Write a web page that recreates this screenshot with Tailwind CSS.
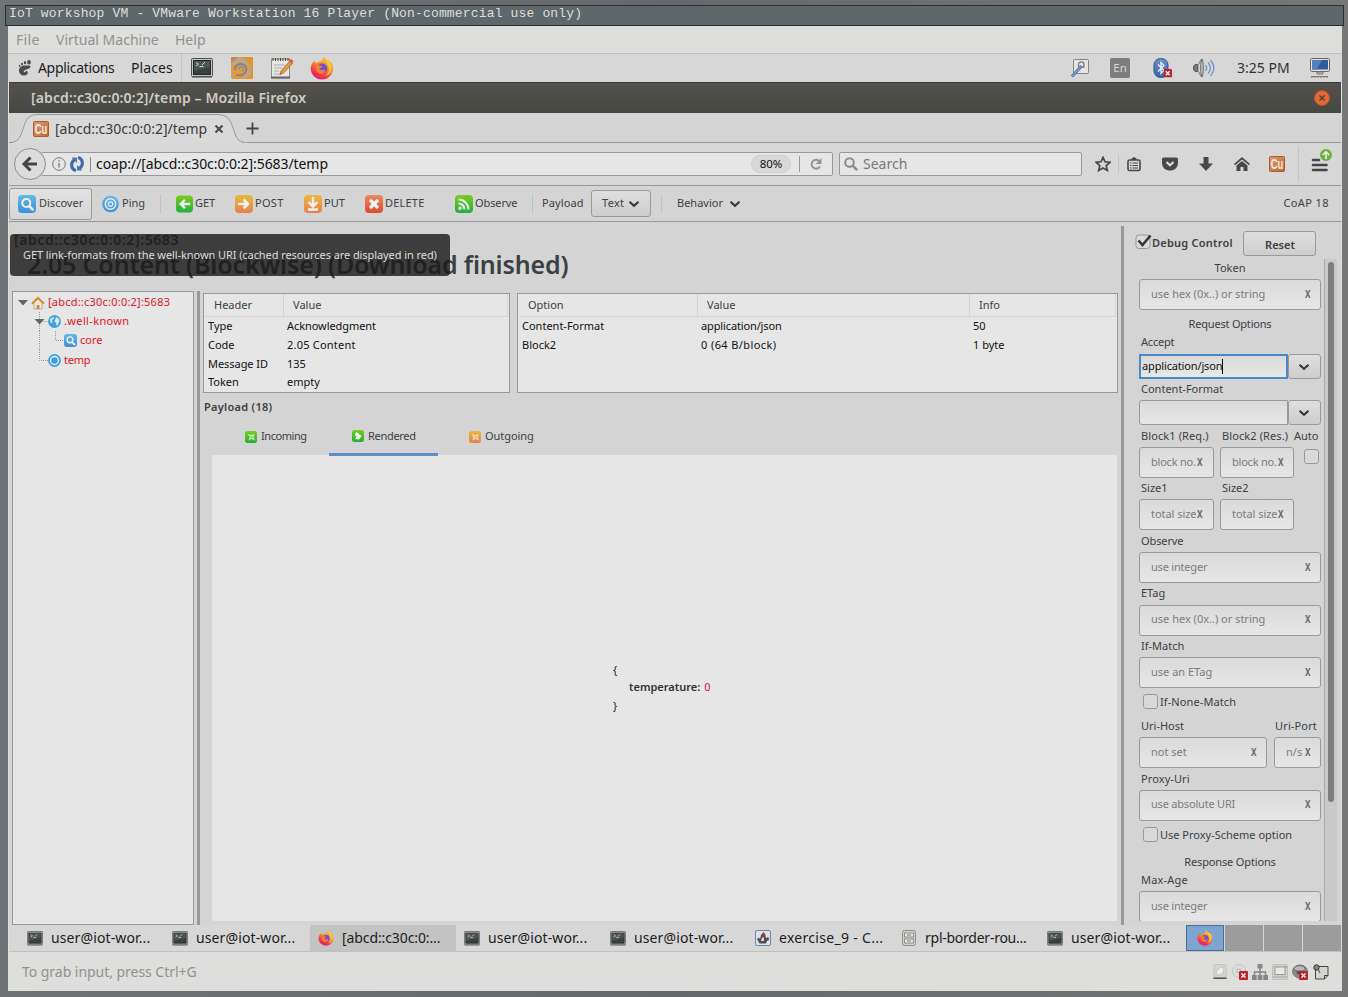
<!DOCTYPE html>
<html lang="en">
<head>
<meta charset="utf-8">
<title>IoT workshop VM</title>
<script src="https://cdn.jsdelivr.net/npm/@tailwindcss/browser@4"></script>
</head>
<body class="w-[1348px] h-[997px] overflow-hidden bg-[#66696b] font-['Noto_Sans',sans-serif] text-[#3b4042]">
<svg width="0" height="0" class="absolute">
  <defs>
    <linearGradient id="gb" x1="0" y1="0" x2="0" y2="1"><stop offset="0" stop-color="#64b9e6"/><stop offset="1" stop-color="#3c8fdc"/></linearGradient>
    <linearGradient id="gg" x1="0" y1="0" x2="0" y2="1"><stop offset="0" stop-color="#78cc1e"/><stop offset="1" stop-color="#22b040"/></linearGradient>
    <linearGradient id="go" x1="0" y1="0" x2="0" y2="1"><stop offset="0" stop-color="#e8b83e"/><stop offset="1" stop-color="#ea7f4a"/></linearGradient>
    <linearGradient id="gr" x1="0" y1="0" x2="0" y2="1"><stop offset="0" stop-color="#ea8a5e"/><stop offset="1" stop-color="#de4a2c"/></linearGradient>
    <linearGradient id="ff" x1=".8" y1="0" x2=".3" y2="1"><stop offset="0" stop-color="#f5dc3c"/><stop offset=".45" stop-color="#f5852c"/><stop offset=".8" stop-color="#ee3350"/><stop offset="1" stop-color="#d61e7c"/></linearGradient>
    <linearGradient id="cu" x1="0" y1="0" x2="1" y2="1"><stop offset="0" stop-color="#dc9c78"/><stop offset="1" stop-color="#c06426"/></linearGradient>
    <linearGradient id="bt" x1="0" y1="0" x2="0" y2="1"><stop offset="0" stop-color="#6e93c4"/><stop offset="1" stop-color="#3465a4"/></linearGradient>
    <linearGradient id="sw" x1="0" y1="0" x2="1" y2="1"><stop offset="0" stop-color="#c98a58"/><stop offset="1" stop-color="#e8a020"/></linearGradient>
  </defs>
  <symbol id="term" viewBox="0 0 22 20"><path d="M1 19.500h20" stroke="#888" /><rect x=".5" y=".5" width="21" height="18" rx="1" fill="#c4c6c2" stroke="#50524e"/><rect x="2.500" y="2.500" width="17" height="14" fill="#38413e" stroke="#222826"/><path d="M3 3h16v6L3 13z" fill="#5a6460" opacity=".6"/><path d="M5 4.500l2.500 1.800L5 8M8.500 8.500h4M11 7l3-3" stroke="#d4d8d4" fill="none"/></symbol>
  <symbol id="fox" viewBox="0 0 24 24"><path d="M4.500 5c.6 1.300 1.200 1.800 2 2.200C8 5.500 10 5.200 11.500 5.400c0-2 1.500-4 3-5 .2 2 1.500 3 3 4.200l.8-.8C22.500 7 23.800 11 22.800 15c-1.200 5-5.800 8.500-10.800 8.500C5.500 23.500.7 18.500.7 12.500c0-3 1.500-6 3.800-7.500z" fill="url(#ff)"/><path d="M16 3.500c4.500 3 6.500 7 5.500 11-1 3.500-4 5-6 5 3-2 4-5 3-8-.6-3-2-5-2.500-8z" fill="#f8d63e" opacity=".75"/><circle cx="12.300" cy="12.500" r="5" fill="#7a4bd0"/><path d="M6 10c2-.8 4-.6 6.300.4-1 1.600-2.500 1.300-2.600 2.400 1 2.400 4.500 1.600 5.800.4-.4 3.500-3 5-5.500 4.500C7 17 5.500 13.500 6 10z" fill="#f2822e"/></symbol>
  <symbol id="cuic" viewBox="0 0 16 16"><rect x=".5" y=".5" width="15" height="15" rx="1" fill="url(#cu)" stroke="#a85c30"/><text x="8" y="13" text-anchor="middle" textLength="12.500" lengthAdjust="spacingAndGlyphs" font-family="Liberation Sans" font-weight="bold" font-size="14" fill="#f4ece6">Cu</text></symbol>
  <symbol id="mag" viewBox="0 0 18 18"><rect width="18" height="18" rx="4" fill="url(#gb)"/><circle cx="8.300" cy="8" r="4" fill="none" stroke="#f2f2f2" stroke-width="2"/><path d="M11.500 11.500l3 3" stroke="#f2f2f2" stroke-width="2.600" stroke-linecap="round"/></symbol>
  <symbol id="badx" viewBox="0 0 9 9"><rect width="9" height="9" rx="1" fill="#c02028"/><path d="M2.500 2.500l4 4m0-4l-4 4" stroke="#fff" stroke-width="1.500"/></symbol>
  <symbol id="chev" viewBox="0 0 12 8"><path d="M1.500 1.700L6 5.800l4.500-4.100" fill="none" stroke="#33393b" stroke-width="2.100"/></symbol>
  <symbol id="tin" viewBox="0 0 12 12"><rect width="12" height="12" rx="2.500" fill="url(#gg)"/><path d="M2.500 3L6 4l3.500-1L8.500 6l1.500 3.500L6.500 8 3 9.500 5 6z" fill="#e9f6e4" opacity=".8"/><path d="M5.500 6h2" stroke="#3cb43c"/></symbol>
  <symbol id="tren" viewBox="0 0 12 12"><rect width="12" height="12" rx="2.500" fill="url(#gg)"/><path d="M4.500 2L7 4l2.500 2L7 9.500 3 9l1.500-2.500L2.800 5z" fill="#eef8ea"/></symbol>
  <symbol id="tout" viewBox="0 0 12 12"><rect width="12" height="12" rx="2.500" fill="url(#go)"/><path d="M2.500 3L6 4l3.500-1L9 6l1 3.500L6.500 8 3.500 9.500 4 6z" fill="#f8e8d6" opacity=".8"/><path d="M5.500 6h2" stroke="#e8904a"/></symbol>
</svg>

<div class="w-[1348px] h-[997px] flex flex-col bg-linear-to-r from-[#707375] via-[#66696b] to-[#777]">
  <!-- window title -->
  <header class="mt-[5px] ml-[5px] w-[1339px] h-[21px] shrink-0 border border-[#2a2e30] bg-[#5e676a] font-['Liberation_Mono',monospace] text-[13px] tracking-[0.16px] leading-[16px] text-[#dcdfdf] pl-[3px] whitespace-pre">IoT workshop VM - VMware Workstation 16 Player (Non-commercial use only)</header>
  <div class="ml-[8px] w-[1334px] h-[965px] shrink-0 flex flex-col bg-[#dededc] whitespace-nowrap">
    <nav class="h-[28px] shrink-0 flex items-center border-b border-[#c0c0be] pl-[8px] text-[14px] text-[#90928f]">
      <span class="w-[40px] tracking-[0.3px]">File</span><span class="w-[119px]">Virtual Machine</span><span>Help</span>
    </nav>
    <!-- desktop panel -->
    <div class="h-[28px] shrink-0 flex items-center bg-[#d7d7d7] text-[14px] text-[#1c1c1c] pl-[10px]">
      <svg class="w-[14px] h-[16px]" viewBox="0 0 14 16"><path d="M7 5.500C3.500 5.500 1 7.500 1 10.500 1 13.500 3.500 15.500 6 15.500c2.500 0 4-1.500 3.800-3.300-.2-1.300-1.800-1.500-2.300-.6-.4.800-1.800.8-1.800-.3C5.700 9.500 12.500 9.500 12.500 6.500c0-1.300-2.500-1-5.500-1z" fill="#4a4c4c"/><ellipse cx="11" cy="2.200" rx="1.800" ry="2.200" fill="#4a4c4c"/><ellipse cx="7" cy="2.700" rx="1.200" ry="1.600" fill="#4a4c4c"/><ellipse cx="4" cy="4" rx="1" ry="1.300" fill="#4a4c4c"/><ellipse cx="1.700" cy="5.800" rx=".8" ry="1.100" fill="#4a4c4c"/></svg>
      <span class="ml-[6px] w-[93px] pb-[2px] tracking-[-0.33px]">Applications</span><span class="w-[50px] pb-[2px] tracking-[0.1px]">Places</span>
      <span class="w-px h-[28px] bg-[#c3c3c3]"></span>
      <svg class="ml-[9px] w-[22px] h-[20px]"><use href="#term"/></svg>
      <svg class="ml-[18px] w-[22px] h-[22px]" viewBox="0 0 22 22"><rect width="22" height="22" rx="1.500" fill="#b9a68c"/><path d="M9 0h13v22h-8c6-3 8-8 6-13C18 5 14 2 9 0z" fill="#e0962c"/><path d="M0 0h7L0 6z" fill="#cf8448"/><path d="M0 9c2-5 7-7.500 12-6 5 2 7 7 5 12-1 3-3 5-6 7H1C4 20 0 16 0 9z" fill="#e29a3c"/><path d="M1.500 8C5 2.500 12 2.500 15.500 6.500" fill="none" stroke="#a9b0b2" stroke-width="1.800"/><path d="M4 13C3.500 9 7 6.500 10.500 7c4 .6 5.500 4 4.500 7-1.300 3.600-6 5.500-10 3.500" fill="none" stroke="#6f87a0" stroke-width="1.900"/><path d="M8 12.500c-.2-2 1.200-3 2.800-2.600 2 .6 2 3.300.4 4.200" fill="none" stroke="#7d8fa0" stroke-width="1.400"/></svg>
      <svg class="ml-[17px] w-[24px] h-[22px]" viewBox="0 0 24 22"><rect x="1.500" y="2" width="18" height="19" fill="#e6e6e3" stroke="#8c8e8a"/><path d="M1 20.500h19" stroke="#666" stroke-width="2"/><path d="M3 1v3m2.500-3v3M8 1v3m2.500-3v3M13 1v3m2.500-3v3M18 1v3" stroke="#333" stroke-width=".9"/><path d="M4 8h11M4 11h8M4 14h5M4 17h7" stroke="#aaa"/><path d="M20 4l2.500 2.500-9 9.500-3.500 1.500 1-3.500z" fill="#e89a3c" stroke="#8c5a20" stroke-width=".7"/><path d="M19 4l2-2 2.500 2.500-1.700 2z" fill="#d85050"/></svg>
      <svg class="ml-[16px] w-[24px] h-[24px]"><use href="#fox"/></svg>
      <div class="ml-auto h-[28px] flex items-center pr-[11px]">
        <svg class="w-[20px] h-[20px]" viewBox="0 0 20 20"><rect x="3.500" y="1.500" width="15" height="14" rx="1" fill="#e4e4e2" stroke="#84867f"/><path d="M8.500 9V6.500a2.700 2.700 0 0 1 5.400 0V9H11" fill="none" stroke="#777" stroke-width="1.300"/><path d="M11.500 8L2 18.500" stroke="#4c76ae" stroke-width="3"/><path d="M11 8.500L2.500 18" stroke="#9ab6dc" stroke-width="1"/></svg>
        <span class="ml-[20px] w-[20px] h-[20px] bg-[#7e7e7e] rounded-[2px] text-[#d7d7d7] text-[11.500px] leading-[20px] text-center">En</span>
        <svg class="ml-[23px] w-[20px] h-[20px]" viewBox="0 0 20 20"><rect x="1" y=".5" width="14" height="19" rx="6.500" fill="url(#bt)" stroke="#2f5588"/><path d="M5 6.500l6 6-3 3v-11l3 3-6 6" fill="none" stroke="#eef" stroke-width="1.300"/><use href="#badx" x="10.500" y="11" width="8.500" height="8.500"/></svg>
        <svg class="ml-[19px] w-[23px] h-[20px]" viewBox="0 0 23 20"><path d="M3 6.500C1 8 1 12 3 13.500h2.500V6.500z" fill="#777" stroke="#555"/><path d="M6 7l3.500-6v18L6 13z" fill="#d8d8d6" stroke="#777"/><ellipse cx="10" cy="10" rx="1.300" ry="9" fill="#c8c8c6" stroke="#666"/><path d="M13.500 7c1.500 2 1.500 4 0 6M16 4.500c3 3.500 3 7.500 0 11M18.500 2c4.200 5 4.200 11 0 16" fill="none" stroke="#6f93c4" stroke-width="1.300"/></svg>
        <span class="ml-[22px] w-[73px] pb-[2px] text-[#333]">3:25 PM</span>
        <svg class="w-[21px] h-[20px]" viewBox="0 0 21 20"><rect x=".5" y=".5" width="19" height="13" rx="1" fill="#e0e0dc" stroke="#666"/><rect x="2" y="2" width="16" height="9.500" fill="#2f5b98"/><path d="M2 2h10l-5 9.500H2z" fill="#5180bc"/><path d="M7 14h6v2H7zM1 18.500h17" fill="#ccc" stroke="#777"/><path d="M1 19.300h17" stroke="#999" stroke-dasharray="2 1"/></svg>
      </div>
    </div>
    <!-- browser title bar -->
    <div class="h-[31px] ml-px mr-px shrink-0 flex items-center border-t border-[#3c3b37] bg-linear-to-b from-[#53524d] to-[#474742] pl-[22px] pr-[11px] text-[14px] font-bold text-[#cfcdc4]">
      <span class="pb-[2px] font-semibold tracking-[0.12px]">[abcd::c30c:0:0:2]/temp – Mozilla Firefox</span>
      <svg class="ml-auto w-[16px] h-[16px]" viewBox="0 0 16 16"><circle cx="8" cy="8" r="7.500" fill="#e06a3c" stroke="#b8502c"/><path d="M5.500 5.500l5 5m0-5l-5 5" stroke="#442" stroke-width="1.300"/></svg>
    </div>
    <!-- tab strip -->
    <div class="h-[30px] ml-px mr-px shrink-0 relative flex items-center bg-[#d4d4d4] border-b border-[#999]">
      <svg class="absolute left-0 top-0 w-[250px] h-[30px]" viewBox="0 0 250 30"><path d="M0 29.500H2C18 29 10 1.500 28 1.500H206C230 1.500 218 29 236 29.500h2v.5H0z" fill="#d9d9d9"/><path d="M0 29.500H2C18 29 10 1.500 28 1.500H208C230 1.500 220 29 236 29.500" fill="none" stroke="#999"/></svg>
      <div class="relative flex items-center pl-[24px] pt-[2px] text-[14px] text-[#3b3b3b]">
        <svg class="w-[16px] h-[16px]"><use href="#cuic"/></svg>
        <span class="ml-[6px] w-[159px] tracking-[-0.04px]">[abcd::c30c:0:0:2]/temp</span>
        <svg class="w-[10px] h-[10px]" viewBox="0 0 10 10"><path d="M1.500 1.500l7 7m0-7l-7 7" stroke="#4c4c4c" stroke-width="2.200"/></svg>
        <svg class="ml-[22px] w-[13px] h-[13px]" viewBox="0 0 13 13"><path d="M6.500 .5v12M.5 6.500h12" stroke="#444" stroke-width="1.800"/></svg>
      </div>
    </div>
    <!-- navigation bar -->
    <div class="h-[43px] ml-px mr-px shrink-0 flex items-center bg-[#d7d7d7] border-b border-[#999]">
      <svg class="ml-[4px] w-[34px] h-[34px] z-10" viewBox="0 0 34 34"><circle cx="17" cy="17" r="15.500" fill="#dcdcdc" stroke="#8e8e8e"/><path d="M24 17H12M17.500 10.500L11 17l6.500 6.500" fill="none" stroke="#444" stroke-width="3"/></svg>
      <div class="-ml-[6px] w-[792px] h-[24px] flex items-center bg-[#e6e6e6] border border-[#999] rounded-[2px] pl-[10px] text-[14px] text-[#111]">
        <svg class="w-[14px] h-[14px]" viewBox="0 0 14 14"><circle cx="7" cy="7" r="6.300" fill="none" stroke="#777"/><path d="M7 6v4.500M7 3.300v1.500" stroke="#777" stroke-width="1.300"/></svg>
        <svg class="ml-[3px] w-[16px] h-[16px]" viewBox="0 0 16 16"><path d="M7 14.500C2 13.500 1 7 5.500 3.500M9 1.500c5 1 6 7.500 1.500 11" fill="none" stroke="#3f6aa8" stroke-width="3"/><path d="M2.500 1.500h5.500v5.500zM13.500 14.500H8V9z" fill="#4a76b4"/></svg>
        <span class="ml-[5px] w-px h-[15px] bg-[#888]"></span>
        <span class="ml-[5px] pb-[2px] tracking-[-0.08px]">coap://[abcd::c30c:0:0:2]:5683/temp</span>
        <span class="ml-auto w-[40px] h-[18px] rounded-full bg-[#d8d8d8] border border-[#cfcfcf] text-center text-[11.500px] leading-[16px]">80%</span>
        <span class="ml-[8px] w-px h-[16px] bg-[#999]"></span>
        <svg class="ml-[9px] mr-[9px] w-[14px] h-[14px]" viewBox="0 0 14 14"><path d="M10.500 4.200A4.500 4.500 0 1 0 11 9.500" fill="none" stroke="#8b979f" stroke-width="2"/><path d="M12.500 1v6h-6z" fill="#8b979f"/></svg>
      </div>
      <div class="ml-[6px] w-[243px] h-[24px] flex items-center bg-[#e6e6e6] border border-[#999] rounded-[2px] pl-[4px] text-[14px] text-[#787878]">
        <svg class="w-[14px] h-[14px]" viewBox="0 0 14 14"><circle cx="5.500" cy="5.500" r="4.300" fill="none" stroke="#8c8c8c" stroke-width="2"/><path d="M8.800 8.800l4.400 4.400" stroke="#8c8c8c" stroke-width="2.500"/></svg>
        <span class="ml-[5px] pb-[2px]">Search</span>
      </div>
      <div class="flex items-center ml-[13px]">
        <svg class="w-[16px] h-[16px]" viewBox="0 0 16 16"><path d="M8 1.300l2 4.500 4.900.5-3.700 3.200 1.100 4.900L8 11.900l-4.300 2.500 1.100-4.900L1.100 6.300 6 5.800z" fill="none" stroke="#484848" stroke-width="1.700"/></svg>
        <span class="ml-[7px] w-px h-[16px] bg-[#c0c0c0]"></span>
        <svg class="ml-[8px] w-[14px] h-[16px]" viewBox="0 0 14 16"><rect x="1" y="4" width="12" height="10.500" rx="1.500" fill="none" stroke="#484848" stroke-width="1.600"/><path d="M4.500 4V2.500L7 1l2.500 1.500V4z" fill="#484848"/><path d="M3 7h1.500m1 0H11M3 9.500h1.500m1 0H11M3 12h1.500m1 0H11" stroke="#484848" stroke-width="1.200"/></svg>
        <svg class="ml-[21px] w-[16px] h-[16px]" viewBox="0 0 16 16"><path d="M1.500 1.500h13q1.500 0 1.500 1.500v4c0 10-16 10-16 0V3q0-1.500 1.500-1.500z" fill="#484848"/><path d="M4.500 6L8 9.300 11.500 6" fill="none" stroke="#ddd" stroke-width="2"/></svg>
        <svg class="ml-[21px] w-[14px] h-[16px]" viewBox="0 0 14 16"><path d="M4.500 1h5v6.500H14L7 15 0 7.500h4.500z" fill="#484848"/></svg>
        <svg class="ml-[21px] w-[16px] h-[16px]" viewBox="0 0 16 16"><path d="M8 1l8 7-1 1.200L8 3.500 1 9.200 0 8zM8 5l5.500 4.500V15H9.500v-4h-3v4h-4V9.500z" fill="#484848"/></svg>
        <svg class="ml-[19px] w-[16px] h-[16px]"><use href="#cuic"/></svg>
        <span class="ml-[13px] w-px h-[36px] bg-[#c4c4c4]"></span>
        <svg class="ml-[12px] -mt-[6px] w-[22px] h-[26px]" viewBox="0 0 22 26"><path d="M2 12h6M2 17h13.500M2 22h13.500" stroke="#444" stroke-width="2.600" stroke-linecap="round"/><circle cx="15" cy="7" r="6" fill="#6cb33f"/><path d="M15 11V4M11.800 7L15 3.800 18.200 7" fill="none" stroke="#eee" stroke-width="1.600"/></svg>
      </div>
    </div>
    <!-- CoAP toolbar -->
    <div class="h-[36px] ml-px mr-px shrink-0 flex items-center bg-[#d4d4d4] border-b border-[#999] text-[11px]">
      <div class="w-[83px] h-[32px] flex items-center border border-[#999] rounded-[3px] bg-linear-to-b from-[#e2e2e2] to-[#d6d6d6] pl-[8px]"><svg class="w-[18px] h-[18px]"><use href="#mag"/></svg><span class="ml-[3px]">Discover</span></div>
      <svg class="ml-[10px] w-[17px] h-[18px]" viewBox="0 0 18 18"><circle cx="9" cy="9" r="8.800" fill="url(#gb)"/><circle cx="9" cy="9" r="5.500" fill="none" stroke="#eee" stroke-width="1.500"/><circle cx="9" cy="9" r="2.300" fill="none" stroke="#eee" stroke-width="1.400"/></svg>
      <span class="ml-[3px] w-[38px]">Ping</span>
      <span class="w-px h-[20px] bg-[#c0c0c0]"></span>
      <svg class="ml-[15px] w-[17px] h-[18px]" viewBox="0 0 18 18"><rect width="18" height="18" rx="4" fill="url(#gg)"/><path d="M15 9H6M9.500 4.500L5 9l4.500 4.500" fill="none" stroke="#f2f2f2" stroke-width="2.600"/></svg>
      <span class="ml-[2px] w-[40px]">GET</span>
      <svg class="w-[18px] h-[18px]" viewBox="0 0 18 18"><rect width="18" height="18" rx="4" fill="url(#go)"/><path d="M3 9h9M8.500 4.500L13 9l-4.500 4.500" fill="none" stroke="#f2f2f2" stroke-width="2.600"/></svg>
      <span class="ml-[2px] w-[49px] tracking-[0.3px]">POST</span>
      <svg class="w-[18px] h-[18px]" viewBox="0 0 18 18"><rect width="18" height="18" rx="4" fill="url(#go)"/><path d="M9 2v8M4.500 7L9 11.500 13.500 7M4 14.500h10" fill="none" stroke="#f2f2f2" stroke-width="2.400"/></svg>
      <span class="ml-[2px] w-[41px]">PUT</span>
      <svg class="w-[18px] h-[18px]" viewBox="0 0 18 18"><rect width="18" height="18" rx="4" fill="url(#gr)"/><path d="M5 5l8 8m0-8l-8 8" stroke="#f2f2f2" stroke-width="3.200"/></svg>
      <span class="ml-[2px] w-[70px] tracking-[0.2px]">DELETE</span>
      <svg class="w-[18px] h-[18px]" viewBox="0 0 18 18"><rect width="18" height="18" rx="4" fill="url(#gg)"/><circle cx="5" cy="13.200" r="1.700" fill="#f2f2f2"/><path d="M3.500 8.500a6 6 0 0 1 6 6M3.500 4.500a10 10 0 0 1 10 10" fill="none" stroke="#f2f2f2" stroke-width="2"/></svg>
      <span class="ml-[2px] w-[57px] tracking-[-0.1px]">Observe</span>
      <span class="w-px h-[20px] bg-[#c0c0c0]"></span>
      <span class="ml-[9px] w-[49px] tracking-[0.1px]">Payload</span>
      <div class="w-[60px] h-[27px] flex items-center border border-[#999] rounded-[3px] bg-linear-to-b from-[#dfdfdf] to-[#cdcdcd] pl-[10px]"><span class="w-[26px] tracking-[0.3px]">Text</span><svg class="w-[12px] h-[8px]"><use href="#chev"/></svg></div>
      <span class="ml-[10px] w-px h-[18px] bg-[#c0c0c0]"></span>
      <span class="ml-[15px] w-[52px]">Behavior</span><svg class="w-[12px] h-[8px]"><use href="#chev"/></svg>
      <span class="ml-auto pr-[12px] tracking-[0.4px]">CoAP 18</span>
    </div>
    <!-- page -->
    <main class="h-[703px] ml-px mr-px shrink-0 relative flex bg-[#d4d4d4] text-[11px]">
      <section class="w-[1112px] shrink-0 flex flex-col">
        <div class="h-[69px] shrink-0 font-semibold pt-[9px]">
          <div class="pl-[5px] h-[18px] leading-[18px] text-[14px] tracking-[0.6px]">[abcd::c30c:0:0:2]:5683</div>
          <div class="pl-[18px] h-[32px] leading-[30px] text-[25px] tracking-[-0.15px]">2.05 Content (Blockwise) (Download finished)</div>
        </div>
        <div class="flex h-[634px]">
          <div class="ml-[3px] w-[182px] border border-[#999] bg-[#e6e6e6] text-[#e8141c] flex flex-col pt-px">
            <div class="h-[19px] flex items-center pl-[5px]"><svg class="w-[11px] h-[6px]" viewBox="0 0 11 6"><path d="M0 0h10L5 5.500z" fill="#666"/></svg><svg class="ml-[2px] w-[14px] h-[14px]" viewBox="0 0 14 14"><path d="M3 7l4-4 4 4v6H3z" fill="#f0ece6" stroke="#b4a898"/><path d="M.8 7.800L7 1.800l6.200 6" fill="none" stroke="#e08a30" stroke-width="2"/><path d="M5.500 9h3v4h-3z" fill="#c88848"/></svg><span class="ml-[3px] tracking-[0.22px]">[abcd::c30c:0:0:2]:5683</span></div>
            <div class="h-[19px] flex items-center pl-[21px]"><svg class="w-[14px] h-[19px]" viewBox="0 0 14 19"><path d="M5.500 0v19M5.500 9.500H14" stroke="#999" stroke-dasharray="1 1"/><path d="M.5 7h10L5.500 12.500z" fill="#666"/></svg><svg class="w-[13px] h-[13px]" viewBox="0 0 13 13"><circle cx="6.500" cy="6.500" r="6.400" fill="#3f9fe0"/><path d="M1.800 4.500L5 2l1.500 1L4 5l.5 2L3 8.500zM8 2l2.500 1.500L11.500 6 10 9.500 8.500 11 8 8 6.500 6.500z" fill="#d4eafa"/></svg><span class="ml-[3px] tracking-[0.36px]">.well-known</span></div>
            <div class="h-[19px] flex items-center pl-[21px]"><svg class="w-[30px] h-[19px]" viewBox="0 0 30 19"><path d="M5.500 0v19M21.500 0v9.500H29" fill="none" stroke="#999" stroke-dasharray="1 1"/></svg><svg class="w-[13px] h-[13px]"><use href="#mag"/></svg><span class="ml-[3px]">core</span></div>
            <div class="h-[20px] flex items-center pl-[21px]"><svg class="w-[14px] h-[20px]" viewBox="0 0 14 20"><path d="M5.500 0v10.500H14" fill="none" stroke="#999" stroke-dasharray="1 1"/></svg><svg class="w-[13px] h-[13px]" viewBox="0 0 13 13"><circle cx="6.500" cy="6.500" r="6.400" fill="#3f9fe0"/><circle cx="6.500" cy="6.500" r="4" fill="none" stroke="#e8f4fc" stroke-width="1.300"/></svg><span class="ml-[3px] pt-px tracking-[-0.2px]">temp</span></div>
          </div>
          <div class="ml-[3px] w-[3px] bg-[#999]"></div>
          <div class="ml-[3px] flex flex-col w-[915px]">
            <div class="mt-[2px] h-[100px] flex gap-[7px]">
              <div class="w-[307px] border border-[#999] bg-[#e6e6e6] text-[#111]">
                <div class="h-[23px] ml-px mr-px flex border-b border-r border-[#d2d2d2] leading-[22px] text-[#3b4042]"><span class="w-[79px] pl-[9px] border-r border-[#d2d2d2]">Header</span><span class="pl-[9px]">Value</span></div>
                <div class="grid grid-cols-[79px_1fr] grid-rows-[19px_19px_18px_19px] leading-[18px] pl-[4px]"><span>Type</span><span class="tracking-[-0.07px]">Acknowledgment</span><span>Code</span><span class="tracking-[0.22px]">2.05 Content</span><span class="tracking-[-0.05px]">Message ID</span><span>135</span><span>Token</span><span>empty</span></div>
              </div>
              <div class="w-[601px] border border-[#999] bg-[#e6e6e6] text-[#111]">
                <div class="h-[23px] ml-px mr-px flex border-b border-r border-[#d2d2d2] leading-[22px] text-[#3b4042]"><span class="w-[179px] pl-[9px] border-r border-[#d2d2d2]">Option</span><span class="w-[272px] pl-[9px] border-r border-[#d2d2d2]">Value</span><span class="pl-[9px]">Info</span></div>
                <div class="grid grid-cols-[179px_272px_1fr] auto-rows-[19px] leading-[18px] pl-[4px]"><span>Content-Format</span><span class="tracking-[-0.13px]">application/json</span><span>50</span><span>Block2</span><span class="tracking-[0.4px]">0 (64 B/block)</span><span>1 byte</span></div>
              </div>
            </div>
            <div class="h-[28px] leading-[28px] pl-px font-semibold tracking-[0.28px]">Payload (18)</div>
            <div class="h-[34px] flex pl-[9px]">
              <div class="w-[117px] flex items-start pl-[33px] pt-[8px]"><svg class="mt-[2px] w-[12px] h-[12px]"><use href="#tin"/></svg><span class="ml-[4px] leading-[14px] tracking-[-0.45px]">Incoming</span></div>
              <div class="w-[109px] flex items-start pl-[23px] pt-[8px] h-[35px] border-b-3 border-[#5b8fc8] z-10"><svg class="mt-px w-[12px] h-[12px]"><use href="#tren"/></svg><span class="ml-[4px] leading-[14px] tracking-[-0.3px]">Rendered</span></div>
              <div class="flex items-start pl-[31px] pt-[8px]"><svg class="mt-[2px] w-[12px] h-[12px]"><use href="#tout"/></svg><span class="ml-[4px] leading-[14px] tracking-[-0.05px]">Outgoing</span></div>
            </div>
            <div class="ml-[9px] w-[905px] h-[466px] bg-[#e6e6e6] flex items-center justify-center">
              <div class="w-[103px] leading-[18px] text-[#222] pb-px"><div>{</div><div class="pl-[16px] h-[17px] leading-[16px]"><b class="font-semibold text-[#333]">temperature:</b><span class="ml-[4px] text-[#e01440]">0</span></div><div class="pt-px">}</div></div>
            </div>
          </div>
        </div>
      </section>
      <div class="mt-[4px] w-[3px] h-[699px] bg-[#999]"></div>
      <!-- debug control sidebar -->
      <aside class="flex-1 flex flex-col">
        <div class="h-[37px] pt-[9px] pl-[11px] flex font-semibold">
          <svg class="mt-[3px] w-[17px] h-[16px]" viewBox="0 0 17 16"><rect x="1" y="1" width="14" height="13.500" rx="3" fill="#dadada" stroke="#999"/><path d="M3.500 6.500l4 4.500L15.500 1.500" fill="none" stroke="#33393b" stroke-width="2.600"/></svg>
          <span class="w-[91px] leading-[23px] tracking-[0.22px]">Debug Control</span>
          <span class="w-[73px] h-[25px] border border-[#999] rounded-[3px] bg-linear-to-b from-[#dfdfdf] to-[#cdcdcd] text-center leading-[25px] pl-px">Reset</span>
        </div>
        <div class="h-[662px] flex overflow-hidden">
          <div class="ml-[15px] w-[182px] flex flex-col *:shrink-0">
            <div class="h-[20px] leading-[18px] text-center">Token</div>
            <div class="h-[31px] flex justify-between items-center border border-[#999] rounded-[3px] bg-linear-to-b from-[#dadada] to-[#e7e7e7] pl-[11px] pr-[9px] text-[#7c7c7c]"><span>use hex (0x..) or string</span><b class="text-[11px] scale-x-75 text-[#666c6e]">X</b></div>
            <div class="h-[23px] leading-[28px] text-center tracking-[-0.2px]">Request Options</div>
            <div class="h-[21px] leading-[18px] pl-[2px] tracking-[-0.2px]">Accept</div>
            <div class="h-[25px] flex"><div class="w-[149px] border-2 border-[#4a88cc] bg-linear-to-b from-[#dadada] to-[#e7e7e7] pl-px pb-px leading-[20px] text-[#111] flex items-center"><span class="tracking-[-0.15px]">application/json</span><span class="w-px h-[15px] bg-black"></span></div><div class="w-[33px] border border-[#999] rounded-[3px] bg-linear-to-b from-[#dfdfdf] to-[#cdcdcd] flex items-center justify-center pr-[2px]"><svg class="w-[12px] h-[8px]"><use href="#chev"/></svg></div></div>
            <div class="h-[21px] leading-[20px] pl-[2px]">Content-Format</div>
            <div class="h-[25px] flex"><div class="w-[149px] border border-[#999] rounded-l-[3px] bg-linear-to-b from-[#dadada] to-[#e7e7e7]"></div><div class="w-[33px] border border-[#999] rounded-[3px] bg-linear-to-b from-[#dfdfdf] to-[#cdcdcd] flex items-center justify-center pr-[2px]"><svg class="w-[12px] h-[8px]"><use href="#chev"/></svg></div></div>
            <div class="h-[22px] leading-[22px] pl-[2px] flex"><span class="w-[81px] tracking-[0.1px]">Block1 (Req.)</span><span class="w-[72px] tracking-[0.1px]">Block2 (Res.)</span><span>Auto</span></div>
            <div class="h-[31px] flex gap-[6px] text-[#7c7c7c]"><div class="w-[75px] flex items-center border border-[#999] rounded-[3px] bg-linear-to-b from-[#dadada] to-[#e7e7e7] pl-[11px] pb-px"><span class="w-[45px] tracking-[-0.22px]">block no.</span><b class="text-[11px] scale-x-75 text-[#666c6e]">X</b></div><div class="w-[74px] flex items-center border border-[#999] rounded-[3px] bg-linear-to-b from-[#dadada] to-[#e7e7e7] pl-[11px] pb-px"><span class="w-[45px] tracking-[-0.22px]">block no.</span><b class="text-[11px] scale-x-75 text-[#666c6e]">X</b></div><span class="mt-[2px] ml-[4px] w-[15px] h-[15px] border border-[#999] rounded-[3px] bg-[#d9d9d9]"></span></div>
            <div class="h-[21px] leading-[20px] pl-[2px] flex"><span class="w-[81px]">Size1</span><span>Size2</span></div>
            <div class="h-[31px] flex gap-[6px] text-[#7c7c7c]"><div class="w-[75px] flex items-center border border-[#999] rounded-[3px] bg-linear-to-b from-[#dadada] to-[#e7e7e7] pl-[11px]"><span class="w-[45px] tracking-[-0.05px] overflow-hidden">total size</span><b class="text-[11px] scale-x-75 text-[#666c6e]">X</b></div><div class="w-[74px] flex items-center border border-[#999] rounded-[3px] bg-linear-to-b from-[#dadada] to-[#e7e7e7] pl-[11px]"><span class="w-[45px] tracking-[-0.05px] overflow-hidden">total size</span><b class="text-[11px] scale-x-75 text-[#666c6e]">X</b></div></div>
            <div class="h-[22px] leading-[22px] pl-[2px] tracking-[-0.1px]">Observe</div>
            <div class="h-[31px] flex justify-between items-center border border-[#999] rounded-[3px] bg-linear-to-b from-[#dadada] to-[#e7e7e7] pl-[11px] pr-[9px] text-[#7c7c7c]"><span class="tracking-[-0.2px]">use integer</span><b class="text-[11px] scale-x-75 text-[#666c6e]">X</b></div>
            <div class="h-[22px] leading-[20px] pl-[2px]">ETag</div>
            <div class="h-[31px] flex justify-between items-center border border-[#999] rounded-[3px] bg-linear-to-b from-[#dadada] to-[#e7e7e7] pl-[11px] pr-[9px] pb-[2px] text-[#7c7c7c]"><span>use hex (0x..) or string</span><b class="text-[11px] scale-x-75 text-[#666c6e]">X</b></div>
            <div class="h-[21px] leading-[20px] pl-[2px]">If-Match</div>
            <div class="h-[31px] flex justify-between items-center border border-[#999] rounded-[3px] bg-linear-to-b from-[#dadada] to-[#e7e7e7] pl-[11px] pr-[9px] text-[#7c7c7c]"><span>use an ETag</span><b class="text-[11px] scale-x-75 text-[#666c6e]">X</b></div>
            <div class="h-[28px] flex items-center pl-[4px]"><span class="mb-px w-[15px] h-[15px] border border-[#999] rounded-[3px] bg-[#d9d9d9]"></span><span class="ml-[2px] tracking-[0.1px]">If-None-Match</span></div>
            <div class="h-[21px] leading-[20px] pl-[2px] flex"><span class="w-[134px]">Uri-Host</span><span class="tracking-[0.15px]">Uri-Port</span></div>
            <div class="h-[31px] flex gap-[7px] text-[#7c7c7c]"><div class="w-[128px] flex justify-between items-center border border-[#999] rounded-[3px] bg-linear-to-b from-[#dadada] to-[#e7e7e7] pl-[11px] pr-[9px]"><span>not set</span><b class="text-[11px] scale-x-75 text-[#666c6e]">X</b></div><div class="w-[47px] flex justify-between items-center border border-[#999] rounded-[3px] bg-linear-to-b from-[#dadada] to-[#e7e7e7] pl-[11px] pr-[9px]"><span>n/s</span><b class="text-[11px] scale-x-75 text-[#666c6e]">X</b></div></div>
            <div class="h-[22px] leading-[22px] pl-[2px] tracking-[0.1px]">Proxy-Uri</div>
            <div class="h-[31px] flex justify-between items-center border border-[#999] rounded-[3px] bg-linear-to-b from-[#dadada] to-[#e7e7e7] pl-[11px] pr-[9px] pb-[2px] text-[#7c7c7c]"><span class="tracking-[-0.2px]">use absolute URI</span><b class="text-[11px] scale-x-75 text-[#666c6e]">X</b></div>
            <div class="h-[28px] flex items-center pl-[4px]"><span class="mb-px w-[15px] h-[15px] border border-[#999] rounded-[3px] bg-[#d9d9d9]"></span><span class="ml-[2px]">Use Proxy-Scheme option</span></div>
            <div class="h-[22px] leading-[26px] text-center tracking-[-0.15px]">Response Options</div>
            <div class="h-[20px] leading-[18px] pl-[2px] tracking-[0.2px]">Max-Age</div>
            <div class="h-[31px] flex justify-between items-center border border-[#999] rounded-[3px] bg-linear-to-b from-[#dadada] to-[#e7e7e7] pl-[11px] pr-[9px] text-[#7c7c7c]"><span class="tracking-[-0.2px]">use integer</span><b class="text-[11px] scale-x-75 text-[#666c6e]">X</b></div>
          </div>
          <div class="ml-[3px] w-[13px] border-l border-[#aaa] bg-[#c9c9c9] pt-[3px] pl-[3px]"><div class="w-[6px] h-[540px] rounded-full bg-[#7b7f80]"></div></div>
        </div>
      </aside>
      <div class="absolute left-px top-[12px] w-[440px] h-[42px] rounded-[4px] bg-[#1a1a1a]/81 text-[#dcdcdc] leading-[42px] pl-[13px] tracking-[-0.075px]">GET link-formats from the well-known URI (cached resources are displayed in red)</div>
    </main>
    <!-- task bar -->
    <div class="h-[27px] ml-px shrink-0 flex items-center border-b border-[#c0c0be] bg-[#d7d7d7] text-[14px] tracking-[0.12px] text-[#1c1c1c] pl-[10px]">
      <div class="w-[145px] flex items-center pl-[8px]"><svg class="w-[16px] h-[15px]"><use href="#term"/></svg><span class="ml-[8px] pb-px">user@iot-wor...</span></div>
      <div class="w-[146px] flex items-center pl-[8px]"><svg class="w-[16px] h-[15px]"><use href="#term"/></svg><span class="ml-[8px] pb-px">user@iot-wor...</span></div>
      <div class="w-[146px] h-[26px] flex items-center pl-[8px] bg-[#c3c3c3]"><svg class="w-[16px] h-[16px]"><use href="#fox"/></svg><span class="ml-[8px] pb-px tracking-[-0.1px]">[abcd::c30c:0:...</span></div>
      <div class="w-[146px] flex items-center pl-[8px]"><svg class="w-[16px] h-[15px]"><use href="#term"/></svg><span class="ml-[8px] pb-px">user@iot-wor...</span></div>
      <div class="w-[145px] flex items-center pl-[8px]"><svg class="w-[16px] h-[15px]"><use href="#term"/></svg><span class="ml-[8px] pb-px">user@iot-wor...</span></div>
      <div class="w-[146px] flex items-center pl-[8px]"><svg class="w-[16px] h-[16px]" viewBox="0 0 16 16"><rect x=".5" y=".5" width="15" height="15" rx="1.500" fill="#dde2e8" stroke="#6c88a8"/><path d="M8.500 2l2 3 .5 3 2.500-1 .5 3-2 1-1 2.500H4.500L2 9l2-1.500L5 9l1-4z" fill="#4c5054"/><path d="M7 7.500h2V11H6z" fill="#ddd"/><circle cx="8.800" cy="4.800" r="1.600" fill="#c83030"/></svg><span class="ml-[8px] pb-px tracking-[0.3px]">exercise_9 - C...</span></div>
      <div class="w-[145px] flex items-center pl-[8px]"><svg class="w-[16px] h-[16px]" viewBox="0 0 16 16"><rect x="1.500" y=".5" width="13" height="15" rx="2" fill="#d0d1cd" stroke="#8e908b"/><rect x="3.500" y="3" width="9" height="4" fill="#e8e8e5" stroke="#8e908b"/><rect x="3.500" y="9" width="9" height="4" fill="#e8e8e5" stroke="#8e908b"/><path d="M6 5h4M6 11h4" stroke="#777"/></svg><span class="ml-[8px] pb-px tracking-[-0.25px]">rpl-border-rou...</span></div>
      <div class="w-[148px] flex items-center pl-[9px]"><svg class="w-[16px] h-[15px]"><use href="#term"/></svg><span class="ml-[8px] pb-px">user@iot-wor...</span></div>
      <div class="w-[38px] h-[26px] flex items-center justify-center bg-[#80a4d0] border border-[#4a6c98]"><svg class="w-[16px] h-[16px]"><use href="#fox"/></svg></div>
      <div class="ml-px flex gap-px h-[26px]"><span class="w-[38px] bg-[#9c9c9c]"></span><span class="w-[38px] bg-[#9c9c9c]"></span><span class="w-[38px] bg-[#9c9c9c]"></span></div>
    </div>
    <footer class="h-[39px] shrink-0 flex items-center pl-[14px] pr-[13px] text-[14px] tracking-[-0.04px] text-[#90928f]">
      <span class="pb-px">To grab input, press Ctrl+G</span>
      <div class="ml-auto flex items-center gap-[4px]">
        <svg class="w-[16px] h-[16px]" viewBox="0 0 16 16"><path d="M2 .5h12l.5 13h-13z" fill="#d4d4d2" stroke="#c4c4c2"/><path d="M1.500 13.500h13v1.500h-13z" fill="#555"/><path d="M4 11c0-5 3-8 7-8 2 3 0 7-3 8z" fill="#ececea" stroke="#c0c0be"/></svg>
        <svg class="w-[16px] h-[16px]" viewBox="0 0 16 16"><circle cx="7" cy="7" r="6.500" fill="#dcdcda" stroke="#c4c4c2"/><circle cx="7" cy="7" r="2" fill="#eee" stroke="#aaa"/><use href="#badx" x="7" y="7" width="9" height="9"/></svg>
        <svg class="w-[16px] h-[16px]" viewBox="0 0 16 16"><path d="M5.500 0h5v4.500h-5zM0 11h4.700v5H0zM5.700 11h4.700v5H5.700zM11.300 11H16v5h-4.700z" fill="#858888"/><path d="M8 4v7M2.500 11V8h11v3" fill="none" stroke="#858888" stroke-width="1.500"/></svg>
        <svg class="w-[16px] h-[16px]" viewBox="0 0 16 16"><rect x=".5" y=".5" width="15" height="15" rx="1" fill="#cfcfcd" stroke="#c0c0be"/><rect x="3" y="3" width="10" height="7.500" fill="#e8e8e6" stroke="#999"/><path d="M1 13h14" stroke="#aaa"/><path d="M13 3h2" stroke="#e0904a" stroke-width="1.500"/></svg>
        <svg class="w-[16px] h-[16px]" viewBox="0 0 16 16"><ellipse cx="8" cy="7.500" rx="7.500" ry="6.500" fill="#8a8c8c" stroke="#777"/><ellipse cx="7.500" cy="4.500" rx="5.500" ry="2.800" fill="#bbb" stroke="#666"/><ellipse cx="7.500" cy="8.500" rx="3" ry="2" fill="#555"/><use href="#badx" x="7" y="7" width="9" height="9"/></svg>
        <svg class="ml-px w-[16px] h-[16px]" viewBox="0 0 16 16"><path d="M2.500 2.500h12.500v9l-3.500 3.500h-9z" fill="#d3d6d0" stroke="#444"/><path d="M15 11.500h-3.500V15M5 5l2 4" fill="none" stroke="#444"/><circle cx="3.500" cy="3.500" r="2.700" fill="#888" stroke="#333"/></svg>
      </div>
    </footer>
  </div>
</div>
</body>
</html>
